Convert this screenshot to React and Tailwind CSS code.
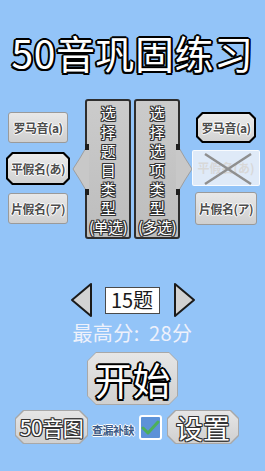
import React from "react";

const FONT = "font-['Noto_Sans_CJK_SC','Noto_Sans',sans-serif]";

// octagon clips
const OCT6 =
  "[clip-path:polygon(6px_0,calc(100%_-_6px)_0,100%_6px,100%_calc(100%_-_6px),calc(100%_-_6px)_100%,6px_100%,0_calc(100%_-_6px),0_6px)]";
const OCT5 =
  "[clip-path:polygon(5px_0,calc(100%_-_5px)_0,100%_5px,100%_calc(100%_-_5px),calc(100%_-_5px)_100%,5px_100%,0_calc(100%_-_5px),0_5px)]";
const OCT9 =
  "[clip-path:polygon(9px_0,calc(100%_-_9px)_0,100%_9px,100%_calc(100%_-_9px),calc(100%_-_9px)_100%,9px_100%,0_calc(100%_-_9px),0_9px)]";
const OCT8 =
  "[clip-path:polygon(8px_0,calc(100%_-_8px)_0,100%_8px,100%_calc(100%_-_8px),calc(100%_-_8px)_100%,8px_100%,0_calc(100%_-_8px),0_8px)]";

const OUTLINE_BLACK =
  "[text-shadow:0_2px_0_#000,2px_0_0_#000,0_-2px_0_#000,-2px_0_0_#000,1.5px_1.5px_0_#000,-1.5px_1.5px_0_#000,1.5px_-1.5px_0_#000,-1.5px_-1.5px_0_#000]";
const OUTLINE_DARK =
  "[text-shadow:0_1px_0_#333,1px_0_0_#333,0_-1px_0_#333,-1px_0_0_#333,1px_1px_0_#333,-1px_1px_0_#333,1px_-1px_0_#333,-1px_-1px_0_#333]";
const OUTLINE_LIGHT =
  "[text-shadow:0_1px_0_#fff,1px_0_0_#fff,0_-1px_0_#fff,-1px_0_0_#fff]";

const KanaButton = ({ label }) => (
  <div className="w-[60px] h-[31px] rounded-[3px] border border-[#9a9a9a] bg-gradient-to-b from-[#e8e8e8] to-[#cfcfcf] flex items-center justify-center">
    <span className={`text-[12px] font-bold text-[#4d4d4d] tracking-[-0.5px] ${OUTLINE_LIGHT}`}>{label}</span>
  </div>
);

const SelectedKana = ({ label, w = "w-[60px]", h = "h-[31px]" }) => (
  <div className={`${w} ${h} bg-black p-[2px] ${OCT6}`}>
    <div className={`w-full h-full bg-gradient-to-b from-[#ececec] to-[#d2d2d2] flex items-center justify-center ${OCT5}`}>
      <span className={`text-[12px] font-bold text-[#4d4d4d] tracking-[-0.5px] ${OUTLINE_LIGHT}`}>{label}</span>
    </div>
  </div>
);

const Panel = ({ chars, arrow }) => (
  <div className="relative w-[46px] h-[140px] rounded-[3px] border-2 border-[#2e2e2e] bg-gradient-to-b from-[#cbcbcb] to-[#bdbdbd] flex flex-col items-center pt-[2px]">
    {chars.map((c, i) => (
      <span key={i} className={`text-[15px] leading-[19px] text-white whitespace-nowrap tracking-[-0.5px] ${OUTLINE_DARK}`}>
        {c}
      </span>
    ))}
    {arrow === "left" ? (
      <svg className="absolute left-[-15px] top-[43px]" width="17" height="52" viewBox="0 0 17 52">
        <polygon points="15,2 8,14 1,25 8,36 15,48" fill="#c8c8c8" stroke="#9e9e9e" strokeWidth="1" />
        <rect x="13" y="0" width="4" height="6" fill="#1e1e1e" />
        <rect x="13" y="45" width="4" height="6" fill="#1e1e1e" />
        <rect x="14" y="6" width="3" height="39" fill="#c8c8c8" />
      </svg>
    ) : (
      <svg className="absolute right-[-15px] top-[43px]" width="17" height="52" viewBox="0 0 17 52">
        <polygon points="2,2 9,14 16,25 9,36 2,48" fill="#c8c8c8" stroke="#9e9e9e" strokeWidth="1" />
        <rect x="0" y="0" width="4" height="6" fill="#1e1e1e" />
        <rect x="0" y="45" width="4" height="6" fill="#1e1e1e" />
        <rect x="0" y="6" width="3" height="39" fill="#c8c8c8" />
      </svg>
    )}
  </div>
);

const Tri = ({ dir }) => (
  <svg width="24" height="36" viewBox="0 0 24 36">
    {dir === "left" ? (
      <polygon points="21,2 21,34 2,18" fill="#d2d2d2" stroke="#1a1a1a" strokeWidth="2" strokeLinejoin="round" />
    ) : (
      <polygon points="3,2 3,34 22,18" fill="#d2d2d2" stroke="#1a1a1a" strokeWidth="2" strokeLinejoin="round" />
    )}
  </svg>
);

const GrayOct = ({ className, clipOuter, clipInner, children }) => (
  <div className={`${className} bg-[#a8a8a8] p-px ${clipOuter}`}>
    <div className={`w-full h-full bg-gradient-to-b from-[#e6e6e6] to-[#d0d0d0] flex items-center justify-center ${clipInner}`}>
      {children}
    </div>
  </div>
);

export default function App() {
  return (
    <div className={`w-[265px] h-[471px] bg-[#93c4f8] overflow-hidden flex flex-col items-center ${FONT}`}>
      {/* title */}
      <div className={`mt-[28px] h-[48px] text-[39px] leading-[48px] text-white font-normal tracking-[0.5px] ${OUTLINE_BLACK}`}>
        50音巩固练习
      </div>

      {/* selection area */}
      <div className="mt-[23px] w-full flex items-start">
        <div className="ml-[6px] w-[64px] flex flex-col items-center pt-[13px]">
          <KanaButton label="罗马音(a)" />
          <div className="mt-[9px]">
            <SelectedKana label="平假名(あ)" w="w-[64px]" h="h-[33px]" />
          </div>
          <div className="mt-[8px]">
            <KanaButton label="片假名(ア)" />
          </div>
        </div>

        <div className="ml-[15px] flex gap-[3px]">
          <Panel chars={["选", "择", "题", "目", "类", "型", "(单选)"]} arrow="left" />
          <Panel chars={["选", "择", "选", "项", "类", "型", "(多选)"]} arrow="right" />
        </div>

        <div className="ml-[12px] w-[68px] flex flex-col items-center pt-[13px]">
          <SelectedKana label="罗马音(a)" />
          <div className="mt-[7px] relative w-[68px] h-[36px] rounded-[2px] border border-white/80 bg-[#f2f4f8]/80 flex items-center justify-center">
            <span className="text-[12px] font-bold text-[#d8d8d8]">平假名(あ)</span>
            <svg className="absolute inset-0" width="68" height="36" viewBox="0 0 68 36">
              <line x1="12" y1="3" x2="58" y2="33" stroke="#8f8f8f" strokeWidth="2.5" />
              <line x1="58" y1="3" x2="12" y2="33" stroke="#8f8f8f" strokeWidth="2.5" />
            </svg>
          </div>
          <div className="mt-[6px]">
            <div className="w-[62px] h-[33px] rounded-[3px] border border-[#9a9a9a] bg-gradient-to-b from-[#e8e8e8] to-[#cfcfcf] flex items-center justify-center">
              <span className={`text-[12px] font-bold text-[#4d4d4d] tracking-[-0.5px] ${OUTLINE_LIGHT}`}>片假名(ア)</span>
            </div>
          </div>
        </div>
      </div>

      {/* count selector */}
      <div className="mt-[43px] flex items-center">
        <Tri dir="left" />
        <div className="ml-[11px] w-[55px] h-[27px] bg-white border border-[#4a4a4a] flex items-center justify-center">
          <span className="text-[20px] leading-none text-[#1a1a1a]">15题</span>
        </div>
        <div className="ml-[12px]">
          <Tri dir="right" />
        </div>
      </div>

      <div className="mt-[3px] text-[20px] leading-[24px] text-[#eef1fb] [word-spacing:4px] tracking-[0.5px]">
        最高分: 28分
      </div>

      {/* start */}
      <GrayOct className="mt-[7px] w-[91px] h-[53px]" clipOuter={OCT9} clipInner={OCT8}>
        <span className={`text-[38px] leading-none text-white ${OUTLINE_BLACK}`}>开始</span>
      </GrayOct>

      {/* bottom row */}
      <div className="mt-[5px] w-full flex items-center">
        <GrayOct className="ml-[15px] w-[73px] h-[34px]" clipOuter={OCT8} clipInner={OCT8}>
          <span className={`text-[21px] leading-none text-white tracking-[-0.5px] ${OUTLINE_DARK}`}>50音图</span>
        </GrayOct>
        <span className={`ml-[4px] mt-[6px] text-[11px] font-bold text-[#3b5a86] tracking-[-0.5px] ${OUTLINE_LIGHT}`}>查漏补缺</span>
        <div className="ml-[5px] w-[23px] h-[25px] rounded-[3px] border-2 border-white bg-[#5d92d8] flex items-center justify-center">
          <svg width="19" height="17" viewBox="0 0 19 17">
            <polyline points="2,9 7,14 17,3" fill="none" stroke="#4cb05a" strokeWidth="3" strokeLinecap="round" strokeLinejoin="round" />
          </svg>
        </div>
        <GrayOct className="ml-[5px] w-[72px] h-[34px]" clipOuter={OCT8} clipInner={OCT8}>
          <span className={`text-[27px] leading-none text-white ${OUTLINE_DARK}`}>设置</span>
        </GrayOct>
      </div>
    </div>
  );
}
